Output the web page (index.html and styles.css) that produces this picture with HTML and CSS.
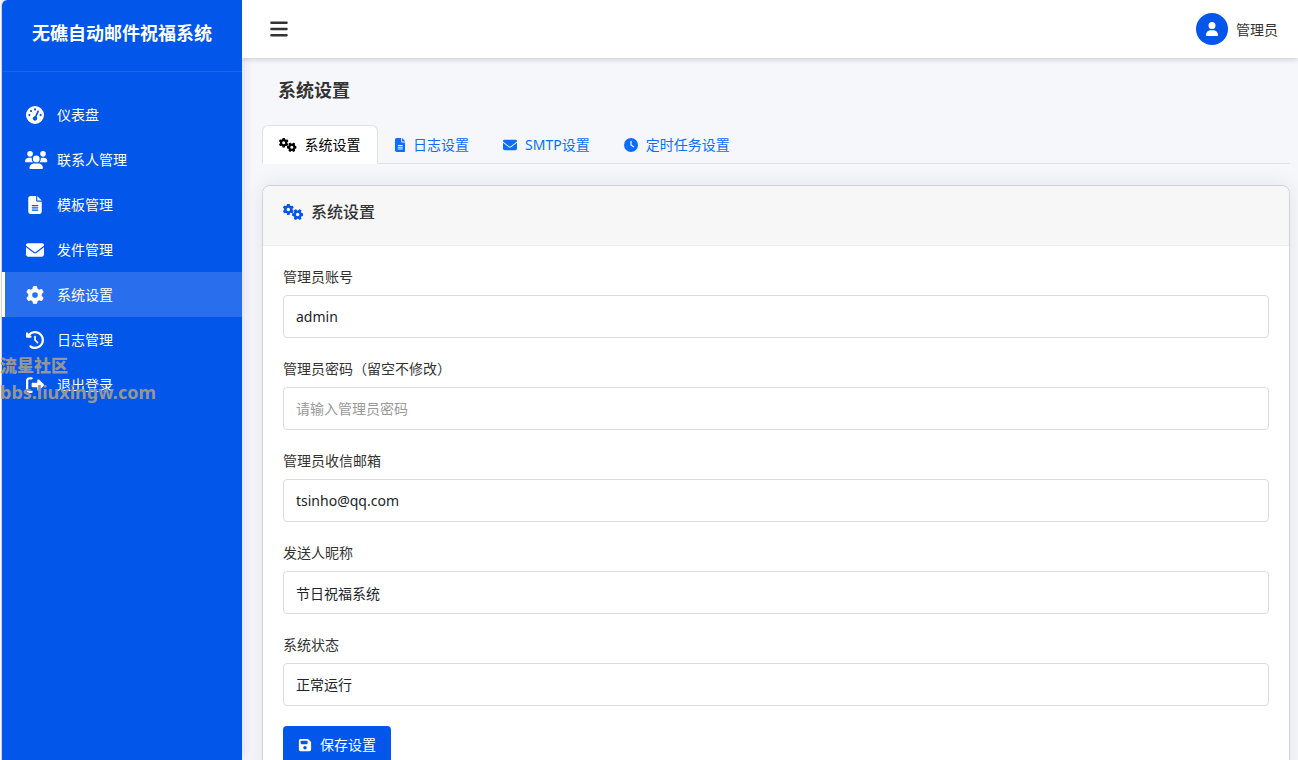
FILE: index.html
```html
<!DOCTYPE html>
<html lang="zh-CN">
<head>
<meta charset="utf-8">
<meta name="viewport" content="width=device-width, initial-scale=1">
<title>系统设置</title>
<link rel="stylesheet" href="styles.css">
</head>
<body>
<svg class="sprite" aria-hidden="true">
  <symbol id="gauge" viewBox="0 0 512 512"><path d="M0 256a256 256 0 1 1 512 0A256 256 0 1 1 0 256zM288 96a32 32 0 1 0 -64 0 32 32 0 1 0 64 0zM256 416c35.3 0 64-28.7 64-64c0-17.4-6.9-33.1-18.1-44.6L366 161.7c5.3-12.1-.2-26.3-12.3-31.6s-26.3 .2-31.6 12.3L257.9 288c-.6 0-1.3 0-1.9 0c-35.3 0-64 28.7-64 64s28.7 64 64 64zM176 144a32 32 0 1 0 -64 0 32 32 0 1 0 64 0zM96 288a32 32 0 1 0 0-64 32 32 0 1 0 0 64zm352-32a32 32 0 1 0 -64 0 32 32 0 1 0 64 0z"/></symbol>
  <symbol id="users" viewBox="0 0 640 512"><path d="M144 0a80 80 0 1 1 0 160A80 80 0 1 1 144 0zM512 0a80 80 0 1 1 0 160A80 80 0 1 1 512 0zM0 298.7C0 239.8 47.8 192 106.7 192h42.7c15.9 0 31 3.5 44.6 9.7c-1.3 7.2-1.9 14.7-1.9 22.3c0 38.2 16.8 72.5 43.3 96c-.2 0-.4 0-.7 0H21.3C9.6 320 0 310.4 0 298.7zM405.3 320c-.2 0-.4 0-.7 0c26.6-23.5 43.3-57.8 43.3-96c0-7.6-.7-15-1.9-22.3c13.6-6.3 28.7-9.7 44.6-9.7h42.7C592.2 192 640 239.8 640 298.7c0 11.8-9.6 21.3-21.3 21.3H405.3zM224 224a96 96 0 1 1 192 0 96 96 0 1 1 -192 0zM128 485.3C128 411.7 187.7 352 261.3 352H378.7C452.3 352 512 411.7 512 485.3c0 14.7-11.9 26.7-26.7 26.7H154.7c-14.7 0-26.7-11.9-26.7-26.7z"/></symbol>
  <symbol id="file" viewBox="0 0 384 512"><path d="M64 0C28.7 0 0 28.7 0 64V448c0 35.3 28.7 64 64 64H320c35.3 0 64-28.7 64-64V160H256c-17.7 0-32-14.3-32-32V0H64zM256 0V128H384L256 0zM112 256H272c8.8 0 16 7.2 16 16s-7.2 16-16 16H112c-8.8 0-16-7.2-16-16s7.2-16 16-16zm0 64H272c8.8 0 16 7.2 16 16s-7.2 16-16 16H112c-8.8 0-16-7.2-16-16s7.2-16 16-16zm0 64H272c8.8 0 16 7.2 16 16s-7.2 16-16 16H112c-8.8 0-16-7.2-16-16s7.2-16 16-16z"/></symbol>
  <symbol id="envelope" viewBox="0 0 512 512"><path d="M48 64C21.5 64 0 85.5 0 112c0 15.1 7.1 29.3 19.2 38.4L236.8 313.6c11.4 8.5 27 8.5 38.4 0L492.8 150.4c12.1-9.1 19.2-23.3 19.2-38.4c0-26.5-21.5-48-48-48H48zM0 176V384c0 35.3 28.7 64 64 64H448c35.3 0 64-28.7 64-64V176L294.4 339.2c-22.8 17.1-54 17.1-76.8 0L0 176z"/></symbol>
  <symbol id="gear" viewBox="0 0 512 512"><path id="gear-shape" d="M495.9 166.6c3.2 8.7 .5 18.4-6.4 24.6l-43.3 39.4c1.1 8.3 1.7 16.8 1.7 25.4s-.6 17.1-1.7 25.4l43.3 39.4c6.9 6.2 9.6 15.9 6.4 24.6c-4.4 11.9-9.7 23.3-15.8 34.3l-4.7 8.1c-6.6 11-14 21.4-22.1 31.2c-5.9 7.2-15.7 9.6-24.5 6.8l-55.7-17.7c-13.4 10.3-28.2 18.9-44 25.4l-12.5 57.1c-2 9.1-9 16.3-18.2 17.8c-13.8 2.3-28 3.5-42.5 3.5s-28.7-1.2-42.5-3.5c-9.2-1.5-16.2-8.7-18.2-17.8l-12.5-57.1c-15.8-6.5-30.6-15.1-44-25.4L83.1 425.9c-8.8 2.8-18.6 .3-24.5-6.8c-8.1-9.8-15.5-20.2-22.1-31.2l-4.7-8.1c-6.1-11-11.4-22.4-15.8-34.3c-3.2-8.7-.5-18.4 6.4-24.6l43.3-39.4C64.6 273.1 64 264.6 64 256s.6-17.1 1.7-25.4L22.4 191.2c-6.9-6.2-9.6-15.9-6.4-24.6c4.4-11.9 9.7-23.3 15.8-34.3l4.7-8.1c6.6-11 14-21.4 22.1-31.2c5.9-7.2 15.7-9.6 24.5-6.8l55.7 17.7c13.4-10.3 28.2-18.9 44-25.4l12.5-57.1c2-9.1 9-16.3 18.2-17.8C227.3 1.2 241.5 0 256 0s28.7 1.2 42.5 3.5c9.2 1.5 16.2 8.7 18.2 17.8l12.5 57.1c15.8 6.5 30.6 15.1 44 25.4l55.7-17.7c8.8-2.8 18.6-.3 24.5 6.8c8.1 9.8 15.5 20.2 22.1 31.2l4.7 8.1c6.1 11 11.4 22.4 15.8 34.3zM256 336a80 80 0 1 0 0-160 80 80 0 1 0 0 160z"/></symbol>
  <symbol id="gears" viewBox="0 0 640 512"><use href="#gear-shape" transform="translate(-8 -6) scale(.7)"/><use href="#gear-shape" transform="translate(648 160) rotate(90) scale(.7)"/></symbol>
  <symbol id="history" viewBox="0 0 512 512"><path d="M75 75L41 41C25.9 25.9 0 36.6 0 57.9V168c0 13.3 10.7 24 24 24H134.1c21.4 0 32.1-25.9 17-41l-30.8-30.8C155 85.5 203 64 256 64c106 0 192 86 192 192s-86 192-192 192c-40.8 0-78.6-12.7-109.7-34.4c-14.5-10.1-34.4-6.6-44.6 7.9s-6.6 34.4 7.9 44.6C151.2 495 201.7 512 256 512c141.4 0 256-114.6 256-256S397.4 0 256 0C185.3 0 121.3 28.7 75 75zm181 53c-13.3 0-24 10.7-24 24V256c0 6.4 2.5 12.5 7 17l72 72c9.4 9.4 24.6 9.4 33.9 0s9.4-24.6 0-33.9l-65-65V152c0-13.3-10.7-24-24-24z"/></symbol>
  <symbol id="logout" viewBox="0 0 512 512"><path d="M377.9 105.9L500.7 228.7c7.2 7.2 11.3 17.1 11.3 27.3s-4.1 20.1-11.3 27.3L377.9 406.1c-6.4 6.4-15 9.9-24 9.9c-18.7 0-33.9-15.2-33.9-33.9l0-62.1-128 0c-17.7 0-32-14.3-32-32l0-64c0-17.7 14.3-32 32-32l128 0 0-62.1c0-18.7 15.2-33.9 33.9-33.9c9 0 17.6 3.6 24 9.9zM160 96L96 96c-17.7 0-32 14.3-32 32l0 256c0 17.7 14.3 32 32 32l64 0c17.7 0 32 14.3 32 32s-14.3 32-32 32l-64 0c-53 0-96-43-96-96L0 128C0 75 43 32 96 32l64 0c17.7 0 32 14.3 32 32s-14.3 32-32 32z"/></symbol>
  <symbol id="bars" viewBox="0 0 448 512"><path d="M0 96C0 78.3 14.3 64 32 64l384 0c17.7 0 32 14.3 32 32s-14.3 32-32 32L32 128C14.3 128 0 113.7 0 96zM0 256c0-17.7 14.3-32 32-32l384 0c17.7 0 32 14.3 32 32s-14.3 32-32 32L32 288c-17.7 0-32-14.3-32-32zM448 416c0 17.7-14.3 32-32 32L32 448c-17.7 0-32-14.3-32-32s14.3-32 32-32l384 0c17.7 0 32 14.3 32 32z"/></symbol>
  <symbol id="user" viewBox="0 0 448 512"><path d="M224 256A128 128 0 1 0 224 0a128 128 0 1 0 0 256zm-45.7 48C79.8 304 0 383.8 0 482.3C0 498.7 13.3 512 29.7 512H418.3c16.4 0 29.7-13.3 29.7-29.7C448 383.8 368.2 304 269.7 304H178.3z"/></symbol>
  <symbol id="clock" viewBox="0 0 512 512"><path d="M256 0a256 256 0 1 1 0 512A256 256 0 1 1 256 0zM232 120V256c0 8 4 15.5 10.7 20l96 64c11 7.4 25.9 4.4 33.3-6.7s4.4-25.9-6.7-33.3L280 243.2V120c0-13.3-10.7-24-24-24s-24 10.7-24 24z"/></symbol>
  <symbol id="save" viewBox="0 0 448 512"><path d="M64 32C28.7 32 0 60.7 0 96V416c0 35.3 28.7 64 64 64H384c35.3 0 64-28.7 64-64V173.3c0-17-6.7-33.3-18.7-45.3L352 50.7C340 38.7 323.7 32 306.7 32H64zm0 96c0-17.7 14.3-32 32-32H288c17.7 0 32 14.3 32 32v64c0 17.7-14.3 32-32 32H96c-17.7 0-32-14.3-32-32V128zM224 288a64 64 0 1 1 0 128 64 64 0 1 1 0-128z"/></symbol>
</svg>

<div class="app">
  <aside class="sidebar">
    <div class="brand">无礁自动邮件祝福系统</div>
    <nav class="menu">
      <a class="menu-item" href="#"><span class="menu-icon"><svg class="icon"><use href="#gauge"/></svg></span>仪表盘</a>
      <a class="menu-item" href="#"><span class="menu-icon"><svg class="icon icon-wide"><use href="#users"/></svg></span>联系人管理</a>
      <a class="menu-item" href="#"><span class="menu-icon"><svg class="icon"><use href="#file"/></svg></span>模板管理</a>
      <a class="menu-item" href="#"><span class="menu-icon"><svg class="icon"><use href="#envelope"/></svg></span>发件管理</a>
      <a class="menu-item active" href="#" aria-current="page"><span class="menu-icon"><svg class="icon"><use href="#gear"/></svg></span>系统设置</a>
      <a class="menu-item" href="#"><span class="menu-icon"><svg class="icon"><use href="#history"/></svg></span>日志管理</a>
      <a class="menu-item" href="#"><span class="menu-icon"><svg class="icon"><use href="#logout"/></svg></span>退出登录</a>
    </nav>
  </aside>

  <div class="main">
    <header class="topbar">
      <button class="toggle" type="button" aria-label="切换菜单"><svg class="icon"><use href="#bars"/></svg></button>
      <div class="account">
        <span class="avatar"><svg class="icon"><use href="#user"/></svg></span>
        <span>管理员</span>
      </div>
    </header>

    <main class="content">
      <h1 class="page-title">系统设置</h1>
      <nav class="tabs">
        <a class="tab active" href="#"><svg class="icon icon-wide"><use href="#gears"/></svg>系统设置</a>
        <a class="tab" href="#"><svg class="icon icon-narrow"><use href="#file"/></svg>日志设置</a>
        <a class="tab" href="#"><svg class="icon"><use href="#envelope"/></svg>SMTP设置</a>
        <a class="tab" href="#"><svg class="icon"><use href="#clock"/></svg>定时任务设置</a>
      </nav>

      <section class="card">
        <h2 class="card-title"><svg class="icon icon-wide"><use href="#gears"/></svg>系统设置</h2>
        <form class="form">
          <div class="field">
            <label for="account">管理员账号</label>
            <input class="control" id="account" type="text" value="admin">
          </div>
          <div class="field">
            <label for="password">管理员密码（留空不修改）</label>
            <input class="control" id="password" type="password" placeholder="请输入管理员密码">
          </div>
          <div class="field">
            <label for="email">管理员收信邮箱</label>
            <input class="control" id="email" type="email" value="tsinho@qq.com">
          </div>
          <div class="field">
            <label for="sender">发送人昵称</label>
            <input class="control" id="sender" type="text" value="节日祝福系统">
          </div>
          <div class="field">
            <label for="status">系统状态</label>
            <select class="control" id="status"><option>正常运行</option></select>
          </div>
          <button class="save" type="button"><svg class="icon"><use href="#save"/></svg>保存设置</button>
        </form>
      </section>
    </main>
  </div>
</div>

<div class="watermark">
  <div>流星社区</div>
  <div class="watermark-site">bbs.liuxingw.com</div>
</div>
</body>
</html>
```
FILE: styles.css
```css
* {
  box-sizing: border-box;
}

body {
  margin: 0;
  background: #f5f7fb;
  color: #333;
  font: 14px/21px "Noto Sans", "Noto Sans CJK SC", sans-serif;
}

a {
  color: inherit;
  text-decoration: none;
}

.sprite {
  display: none;
}

.icon {
  width: 1em;
  height: 1em;
  flex: none;
  fill: currentColor;
}

.icon-wide {
  width: 1.25em;
}

.icon-narrow {
  width: .75em;
}

.app {
  display: flex;
  height: 100vh;
  overflow: hidden;
  border-left: 1px solid #f5f7fb;
}

.sidebar {
  width: 241px;
  flex: none;
  border-left: 1px solid #d0d4d8;
  border-top-left-radius: 6px;
  background: #0256ea;
  color: #fff;
  box-shadow: 2px 0 10px rgba(0, 0, 0, .1);
}

.brand {
  padding: 20px 20px 24px;
  border-bottom: 1px solid rgba(255, 255, 255, .1);
  font-size: 18px;
  font-weight: 700;
  line-height: 27px;
  text-align: center;
}

.menu {
  padding: 20px 0;
}

.menu-item {
  display: flex;
  align-items: center;
  gap: 12px;
  padding: 12px 20px;
  border-left: 3px solid transparent;
}

.menu-item.active {
  border-left-color: #fff;
  background: #296eed;
}

.menu-icon {
  display: flex;
  justify-content: safe center;
  width: 20px;
  font-size: 18px;
}

.main {
  flex: 1;
  min-width: 0;
  overflow: hidden;
}

.topbar {
  display: flex;
  align-items: center;
  justify-content: space-between;
  padding: 13px 20px;
  background: #fff;
  box-shadow: 0 2px 5px rgba(0, 0, 0, .15);
}

.toggle {
  display: flex;
  padding: 0 8px;
  border: 0;
  background: none;
  color: #333;
  font-size: 20px;
}

.toggle .icon {
  width: 18px;
}

.account {
  display: flex;
  align-items: center;
  gap: 8px;
}

.avatar {
  display: flex;
  align-items: center;
  justify-content: center;
  width: 32px;
  height: 32px;
  border-radius: 50%;
  background: #0256ea;
  color: #fff;
}

.content {
  padding: 20px 8px 20px 20px;
}

.page-title {
  margin: 0 0 23px;
  padding-left: 16px;
  font-size: 18px;
  line-height: 24px;
}

.tabs {
  display: flex;
  margin-bottom: 21px;
  border-bottom: 1px solid #dee2e6;
}

.tab {
  display: flex;
  align-items: center;
  gap: 8px;
  margin-bottom: -1px;
  padding: 8px 16px;
  border: 1px solid transparent;
  border-radius: 6px 6px 0 0;
  color: #0d6efd;
}

.tab.active {
  border-color: #dee2e6 #dee2e6 #fff;
  background: #fff;
  color: #000;
}

.card {
  border: 1px solid #cfd1d4;
  border-radius: 8px;
  background: #fff;
  box-shadow: 0 0 20px rgba(0, 0, 50, .08);
}

.card-title {
  display: flex;
  align-items: center;
  gap: 8px;
  margin: 0;
  padding: 16px 20px 23px;
  border-bottom: 1px solid #ededed;
  border-radius: 8px 8px 0 0;
  background: #f7f7f7;
  font-size: 16px;
  font-weight: 500;
  line-height: 20px;
}

.card-title .icon {
  color: #0256ea;
}

.form {
  display: flex;
  flex-direction: column;
  align-items: flex-start;
  gap: 20px;
  padding: 20px;
}

.field {
  display: flex;
  flex-direction: column;
  gap: 8px;
  width: 100%;
}

.control {
  width: 100%;
  height: 43px;
  padding: 10px 12px;
  border: 1px solid #ddd;
  border-radius: 4px;
  background: #fff;
  color: #212529;
  font: inherit;
  appearance: none;
}

.control::placeholder {
  color: #999;
}

.save {
  display: flex;
  align-items: center;
  gap: 8px;
  padding: 8px 15px 10px;
  border: 0;
  border-radius: 4px;
  background: #0256ea;
  color: #fff;
  font: inherit;
}

.watermark {
  position: absolute;
  top: 353px;
  left: 0;
  color: #969696;
  font-size: 17px;
  font-weight: 900;
  line-height: 26px;
  pointer-events: none;
}

.watermark-site {
  font-size: 18px;
  font-weight: 700;
}
```
